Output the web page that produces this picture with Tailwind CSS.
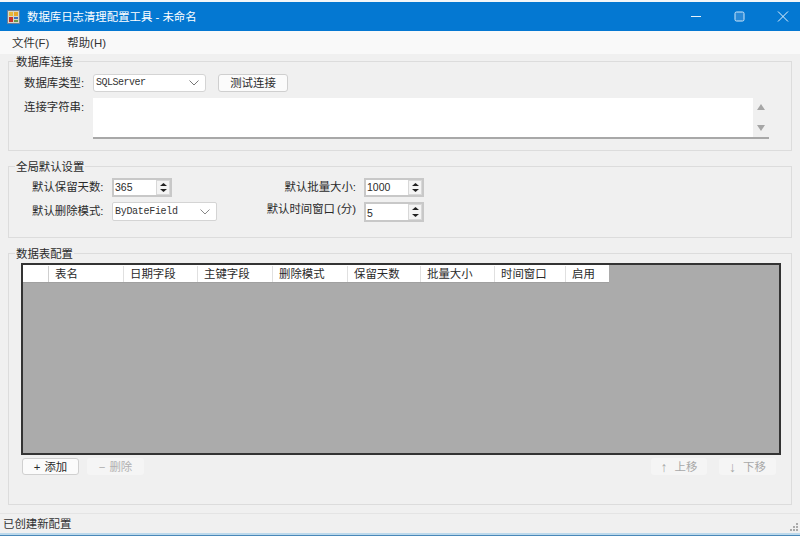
<!DOCTYPE html>
<html lang="zh-CN">
<head>
  <meta charset="UTF-8" />
  <title>数据库日志清理配置工具</title>
  <script src="https://cdn.jsdelivr.net/npm/@tailwindcss/browser@4"></script>
</head>
<body class="w-[800px] h-[536px] overflow-hidden bg-[#f0f0f0] text-[#2a2a2a] text-[11.4px] leading-[16px] font-['Liberation_Sans','Noto_Sans_CJK_SC',sans-serif]">
  <div class="h-[536px] flex flex-col">
    <div class="h-[2px] bg-[#f4f6f8]"></div>

    <!-- title bar -->
    <div class="h-[29px] bg-[#0478d2] text-white flex items-center">
      <svg class="ml-[7px] mr-[7px]" width="13" height="14" viewBox="0 0 13 14">
        <rect x="0.5" y="0.5" width="12" height="13" fill="#d8d8c8" stroke="#6a7f9a"/>
        <rect x="2" y="2" width="4" height="4" fill="#e8b83a"/>
        <rect x="7" y="2" width="4" height="4" fill="#e8a92a"/>
        <rect x="2" y="7" width="4" height="5" fill="#c8332a"/>
        <rect x="7" y="7" width="4" height="2" fill="#3a6fc0"/>
        <rect x="7" y="10" width="4" height="2" fill="#6a9a4a"/>
      </svg>
      <span>数据库日志清理配置工具 - 未命名</span>
      <div class="ml-auto flex items-center">
        <svg width="43" height="29" viewBox="0 0 43 29"><path d="M16 14.5h10" stroke="#e6f2fb" stroke-width="1"/></svg>
        <svg width="43" height="29" viewBox="0 0 43 29"><rect x="17" y="10" width="9" height="9" rx="1.500" fill="#2a8ad8" stroke="#cfe6f8" stroke-width="1"/></svg>
        <svg width="39" height="29" viewBox="0 0 39 29"><path d="M17 9.500l10 10M27 9.500l-10 10" stroke="#e6f2fb" stroke-width="1"/></svg>
      </div>
    </div>

    <!-- menu -->
    <div class="h-[23px] bg-[#f9f9f9] flex items-center gap-[18px] pl-[12px] pt-[1px] text-[#333]">
      <span>文件(F)</span>
      <span>帮助(H)</span>
    </div>

    <div class="px-[8px] pt-[7px] flex flex-col">
      <!-- connection group -->
      <div class="h-[90px] border border-[#dcdcdc] relative">
        <span class="absolute left-[6px] top-[-8px] bg-[#f0f0f0] px-px">数据库连接</span>
        <div class="pl-[15px] pt-[11px] flex items-center h-[30px]">
          <span class="w-[69px]">数据库类型:</span>
          <div class="w-[113px] h-[18px] bg-white border border-[#d4d4d4] rounded-[3px] flex items-center justify-between pl-[2px] pr-[6px] font-['Liberation_Mono',monospace] text-[10px] tracking-[-0.5px] text-[#333]">
            SQLServer
            <svg width="10" height="6" viewBox="0 0 10 6"><path d="M0.5 0.5L5 5l4.500-4.500" fill="none" stroke="#777"/></svg>
          </div>
          <div class="ml-[12px] w-[70px] h-[18px] bg-[#fbfbfb] border border-[#cfcfcf] rounded-[3px] flex items-center justify-center">测试连接</div>
        </div>
        <div class="pl-[15px] pt-[6px] flex items-start">
          <span class="w-[69px] pt-[1px]">连接字符串:</span>
          <div class="w-[676px] h-[41px] bg-white border-b-2 border-[#a8a8a8] flex justify-end">
            <div class="w-[16px] h-[39px] bg-[#f0f0f0] flex flex-col items-center justify-between py-[6px]">
              <svg width="8" height="6" viewBox="0 0 8 6"><path d="M4 0l4 6H0z" fill="#a6a6a6"/></svg>
              <svg width="8" height="6" viewBox="0 0 8 6"><path d="M0 0h8L4 6z" fill="#a6a6a6"/></svg>
            </div>
          </div>
        </div>
      </div>

      <!-- defaults group -->
      <div class="mt-[15px] h-[72px] border border-[#dcdcdc] relative">
        <span class="absolute left-[6px] top-[-8px] bg-[#f0f0f0] px-px">全局默认设置</span>
        <div class="pl-[23px] pt-[11px] flex">
          <div class="w-[253px] flex flex-col">
            <div class="flex items-center h-[19px]">
              <span class="w-[80px] -mt-[2px]">默认保留天数:</span>
              <div class="w-[60px] h-[19px] bg-white border-2 border-[#c8c8c8] flex justify-between pl-px text-[10.5px]">
                <span class="-mt-px">365</span>
                <div class="w-[14px] h-[15px] bg-[#f4f4f4] border border-[#d8d8d8] flex flex-col items-center justify-around">
                  <svg width="7" height="3" viewBox="0 0 7 3"><path d="M3.5 0L7 3H0z" fill="#222"/></svg>
                  <svg width="7" height="3" viewBox="0 0 7 3"><path d="M0 0h7L3.500 3z" fill="#222"/></svg>
                </div>
              </div>
            </div>
            <div class="flex items-center h-[19px] mt-[5px]">
              <span class="w-[80px] -mt-[2px]">默认删除模式:</span>
              <div class="w-[105px] h-[19px] bg-white border border-[#d4d4d4] rounded-[2px] flex items-center justify-between pl-[2px] pr-[6px] font-['Liberation_Mono',monospace] text-[10px] tracking-[-0.3px] text-[#333]">
                ByDateField
                <svg width="10" height="6" viewBox="0 0 10 6"><path d="M0.5 0.5L5 5l4.500-4.500" fill="none" stroke="#888"/></svg>
              </div>
            </div>
          </div>
          <div class="w-[139px] flex flex-col">
            <div class="flex items-center justify-end h-[19px]">
              <span class="mr-[8px] -mt-[2px] whitespace-nowrap">默认批量大小:</span>
              <div class="w-[60px] h-[19px] bg-white border-2 border-[#c8c8c8] flex justify-between pl-px text-[10.5px] shrink-0">
                <span class="-mt-px">1000</span>
                <div class="w-[14px] h-[15px] bg-[#f4f4f4] border border-[#d8d8d8] flex flex-col items-center justify-around">
                  <svg width="7" height="3" viewBox="0 0 7 3"><path d="M3.5 0L7 3H0z" fill="#222"/></svg>
                  <svg width="7" height="3" viewBox="0 0 7 3"><path d="M0 0h7L3.500 3z" fill="#222"/></svg>
                </div>
              </div>
            </div>
            <div class="flex items-center justify-end h-[20px] mt-[5px]">
              <span class="mr-[6px] -mt-[7px] whitespace-nowrap">默认时间窗口<span class="px-[2px]">(分)</span></span>
              <div class="w-[60px] h-[20px] bg-white border-2 border-[#c8c8c8] flex justify-between pl-px text-[10.5px] shrink-0">
                <span class="mt-px">5</span>
                <div class="w-[14px] h-[16px] bg-[#f4f4f4] border border-[#d8d8d8] flex flex-col items-center justify-around">
                  <svg width="7" height="3" viewBox="0 0 7 3"><path d="M3.5 0L7 3H0z" fill="#222"/></svg>
                  <svg width="7" height="3" viewBox="0 0 7 3"><path d="M0 0h7L3.500 3z" fill="#222"/></svg>
                </div>
              </div>
            </div>
          </div>
        </div>
      </div>

      <!-- tables group -->
      <div class="mt-[15px] h-[252px] border border-[#dcdcdc] relative">
        <span class="absolute left-[6px] top-[-8px] bg-[#f0f0f0] px-px">数据表配置</span>
        <div class="ml-[12px] mt-[9px] w-[760px] h-[192px] bg-[#ababab] border-2 border-[#333]">
          <div class="flex h-[18px] w-[586px] bg-white border-b border-[#a0a0a0] pt-px">
            <div class="w-[26px] border-r border-[#cfcfcf]"></div>
            <div class="w-[75px] pl-[6px] border-r border-[#e0e0e0]">表名</div>
            <div class="w-[74px] pl-[6px] border-r border-[#e0e0e0]">日期字段</div>
            <div class="w-[75px] pl-[6px] border-r border-[#e0e0e0]">主键字段</div>
            <div class="w-[75px] pl-[6px] border-r border-[#e0e0e0]">删除模式</div>
            <div class="w-[73px] pl-[6px] border-r border-[#e0e0e0]">保留天数</div>
            <div class="w-[74px] pl-[6px] border-r border-[#e0e0e0]">批量大小</div>
            <div class="w-[71px] pl-[6px] border-r border-[#e0e0e0]">时间窗口</div>
            <div class="w-[43px] pl-[6px]">启用</div>
          </div>
        </div>
        <div class="ml-[13px] mt-[3px] w-[754px] flex items-center">
          <div class="w-[57px] h-[17px] bg-[#fbfbfb] border border-[#d0d0d0] rounded-[3px] flex items-center justify-center gap-[4px]"><span>+</span><span>添加</span></div>
          <div class="ml-[8px] w-[57px] h-[17px] bg-[#f5f5f5] rounded-[3px] flex items-center justify-center gap-[4px] text-[#b0b0b0]"><span>−</span><span>删除</span></div>
          <div class="ml-auto w-[56px] h-[17px] bg-[#f5f5f5] rounded-[3px] flex items-center justify-center gap-[7px] text-[#a8a8a8]"><span class="text-[14px]">↑</span><span>上移</span></div>
          <div class="ml-[12px] w-[57px] h-[17px] bg-[#f5f5f5] rounded-[3px] flex items-center justify-center gap-[7px] text-[#a8a8a8]"><span class="text-[14px]">↓</span><span>下移</span></div>
        </div>
      </div>
    </div>

    <!-- status bar -->
    <div class="mt-[8px] h-[20px] border-t border-[#e4e4e4] pl-[3px] flex items-center relative text-[#333]">
      <span>已创建新配置</span>
      <svg class="absolute right-[1px] bottom-[1px]" width="10" height="10" viewBox="0 0 10 10" fill="#aaa">
        <rect x="7" y="1" width="2" height="2"/><rect x="4" y="4" width="2" height="2"/><rect x="7" y="4" width="2" height="2"/>
        <rect x="1" y="7" width="2" height="2"/><rect x="4" y="7" width="2" height="2"/><rect x="7" y="7" width="2" height="2"/>
      </svg>
    </div>
    <div class="h-[3px] bg-[#bcd9ec] border-b border-[#4a88b8]"></div>
  </div>
</body>
</html>
